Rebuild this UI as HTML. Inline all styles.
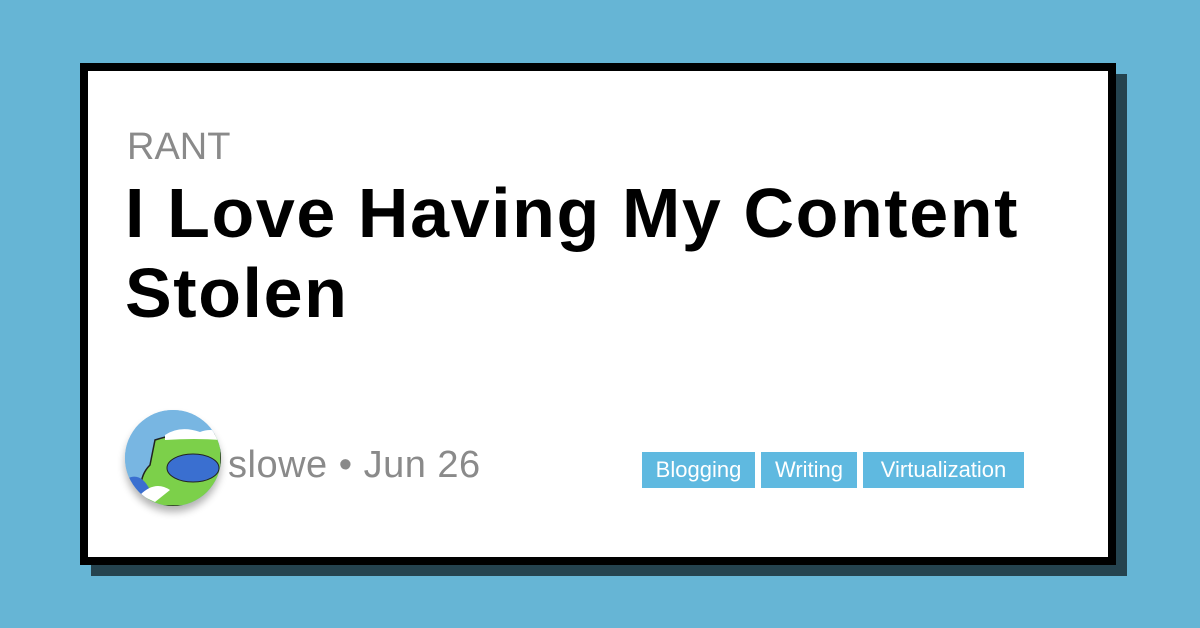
<!DOCTYPE html>
<html><head><style>
body{margin:0;width:1200px;height:628px;background:#66b5d5;position:relative;overflow:hidden;font-family:"Liberation Sans",sans-serif}
.sh{position:absolute;left:91px;top:74px;width:1036px;height:502px;background:#25434f}
.card{position:absolute;left:80px;top:63px;width:1020px;height:486px;border:8px solid #000;background:#fff}
.rant{position:absolute;left:127px;top:126px;font-size:38px;color:#8a8a8a}
.title{position:absolute;left:125px;top:173px;font-size:70px;font-weight:bold;line-height:80px;color:#000;letter-spacing:1.6px;white-space:nowrap}
.av{position:absolute;left:125px;top:410px;width:96px;height:96px;border-radius:50%;overflow:hidden;box-shadow:0 6px 8px rgba(0,0,0,.3);background:#7ab8e0}
.meta{position:absolute;left:228px;top:444px;font-size:38px;color:#8a8a8a;letter-spacing:0.5px}
.tag{position:absolute;top:452px;height:36px;line-height:36px;background:#5fb9e0;color:#fff;font-size:22px;text-align:center}
</style></head><body>
<div class="sh"></div>
<div class="card"></div>
<div class="rant">RANT</div>
<div class="title">I Love Having My Content<br>Stolen</div>
<div class="av"><svg width="96" height="96" viewBox="0 0 96 96">
<rect width="96" height="96" fill="#78b6e2"/>
<path d="M30 30 Q60 20 96 25 L96 96 L20 96 Q10 70 25 55 Z" fill="#7cd04a" stroke="#222" stroke-width="1.5"/>
<ellipse cx="68" cy="58" rx="26" ry="14" fill="#3a6fd0" stroke="#222"/>
<path d="M0 70 Q15 60 25 80 L10 96 L0 96Z" fill="#3a6fd0"/>
<path d="M40 25 Q55 15 75 22 Q85 18 96 22 L96 30 Q70 28 40 30Z" fill="#fff"/>
<path d="M15 85 Q30 70 45 80 L30 92Z" fill="#fff"/>
</svg></div>
<div class="meta">slowe • Jun 26</div>
<div class="tag" style="left:642px;width:113px">Blogging</div>
<div class="tag" style="left:761px;width:96px">Writing</div>
<div class="tag" style="left:863px;width:161px">Virtualization</div>
</body></html>
